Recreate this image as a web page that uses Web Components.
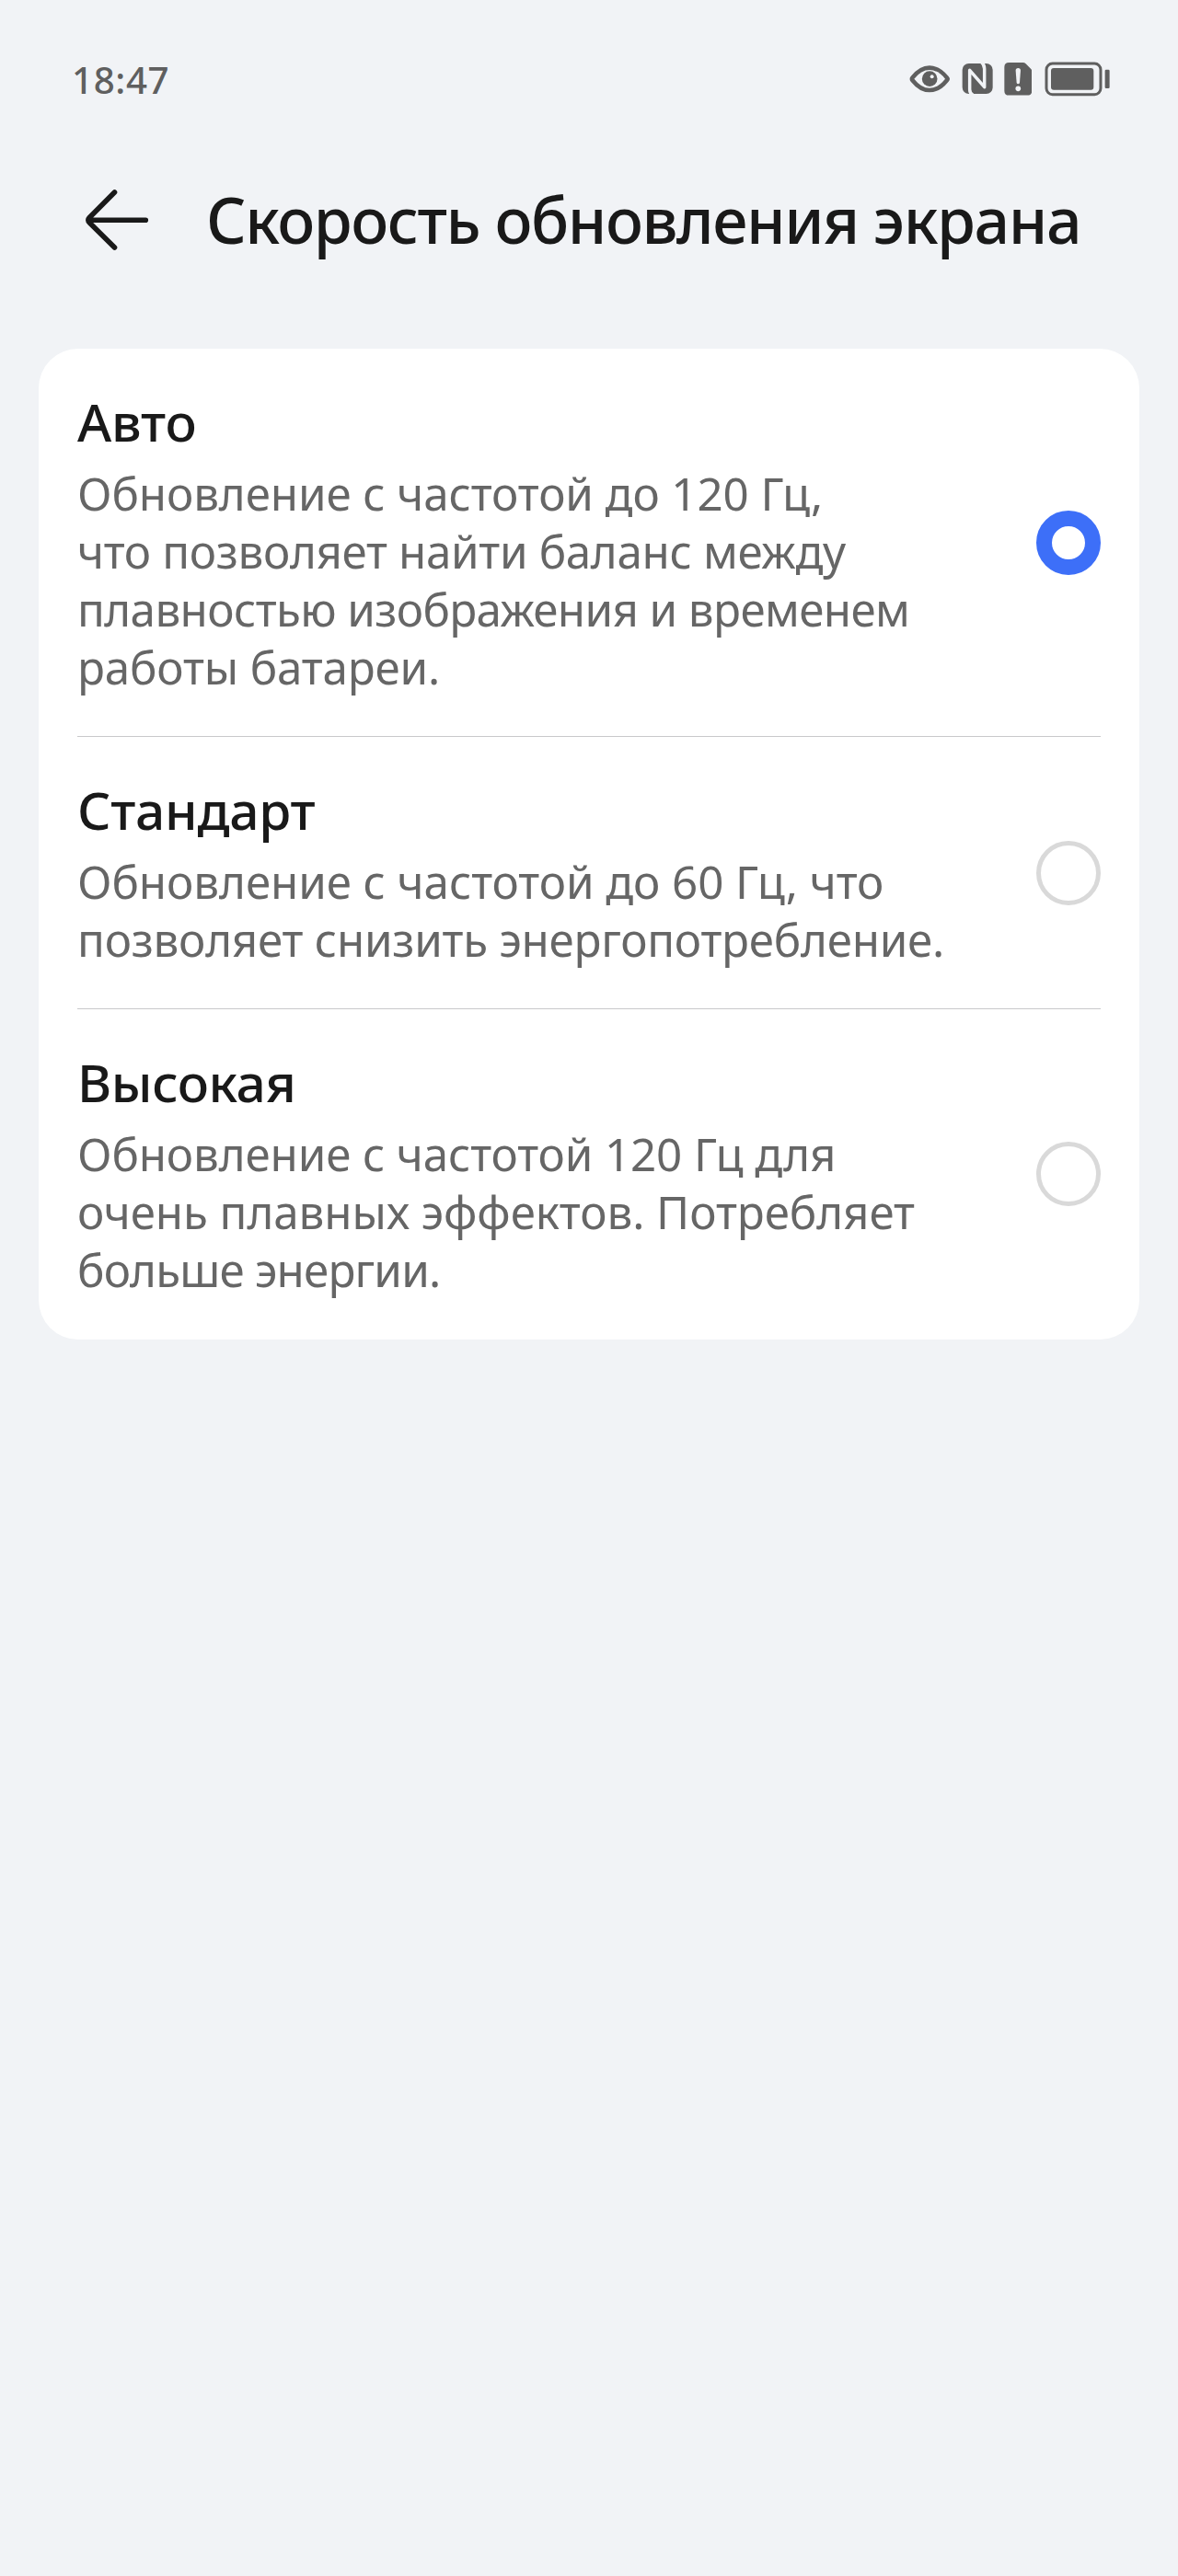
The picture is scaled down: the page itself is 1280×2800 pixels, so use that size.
<!DOCTYPE html>
<html lang="ru">
<head>
<meta charset="utf-8">
<title>Скорость обновления экрана</title>
<style>
    body {
        margin: 0;
        min-height: 2800px;
        background: #f1f3f6;
        color: #191919;
        font-family: "Noto Sans", "Open Sans", sans-serif;
    }
</style>
</head>
<body>

<settings-page>
    <status-bar slot="status" time="18:47"></status-bar>
    <page-header slot="header"><fit-line width="944">Скорость обновления экрана</fit-line></page-header>

    <option-card>
        <option-row checked>
            <fit-line slot="title" width="127.5">Авто</fit-line>
            <fit-line width="805">Обновление с частотой до 120 Гц,</fit-line>
            <fit-line width="834">что позволяет найти баланс между</fit-line>
            <fit-line width="897">плавностью изображения и временем</fit-line>
            <fit-line width="387">работы батареи.</fit-line>
        </option-row>
        <option-row>
            <fit-line slot="title" width="255.5">Стандарт</fit-line>
            <fit-line width="872">Обновление с частотой до 60 Гц, что</fit-line>
            <fit-line width="935">позволяет снизить энергопотребление.</fit-line>
        </option-row>
        <option-row>
            <fit-line slot="title" width="228.5">Высокая</fit-line>
            <fit-line width="819">Обновление с частотой 120 Гц для</fit-line>
            <fit-line width="908">очень плавных эффектов. Потребляет</fit-line>
            <fit-line width="390">больше энергии.</fit-line>
        </option-row>
    </option-card>
</settings-page>

<script>
    class SettingsPage extends HTMLElement {
        constructor() {
            super();
            this.attachShadow({mode: 'open'}).innerHTML = `
                <style>
                    :host { display: flex; flex-direction: column; }
                    main { padding: 0 42px; }
                </style>
                <slot name="status"></slot>
                <slot name="header"></slot>
                <main><slot></slot></main>
            `;
        }
    }

    class StatusBar extends HTMLElement {
        constructor() {
            super();
            this.attachShadow({mode: 'open'}).innerHTML = `
                <style>
                    :host {
                        display: flex;
                        align-items: center;
                        justify-content: space-between;
                        box-sizing: border-box;
                        height: 172px;
                        padding: 0 74px 0 78px;
                        color: #5f5f5f;
                        font-size: 40.3px;
                        font-weight: 500;
                    }
                    .icons { display: flex; align-items: center; }
                    svg { display: block; height: 40px; fill: currentColor; }
                    .eye { width: 44px; margin-right: 12.7px; }
                    .nfc { width: 34px; margin-right: 11.7px; }
                    .sim { width: 30.6px; margin-right: 13.4px; }
                    .battery { width: 71.3px; }
                    .cut { fill: #f1f3f6; }
                </style>
                <fit-line width="101.6">${this.getAttribute('time')}</fit-line>
                <div class="icons">
                    <svg class="eye" viewBox="55 48 132 120">
                        <path d="M57 107Q56 104 60 99Q88 64 121 64Q155 64 183 99Q187 104 187 107Q187 111 183 116Q155 151 121 151Q88 151 60 116Q56 111 57 107Z"/>
                        <path class="cut" d="M71 107Q94 78 121 78Q149 78 172 107Q149 137 121 137Q94 137 71 107Z"/>
                        <circle cx="121.500" cy="107" r="25"/>
                        <circle class="cut" cx="129" cy="100" r="6"/>
                    </svg>
                    <svg class="nfc" viewBox="225 48 102 120">
                        <rect x="227" y="57" width="99" height="99" rx="21"/>
                        <path d="M262 160Q251 155 251 142V79L299 134V74Q299 61 289 52" fill="none" stroke="#f1f3f6" stroke-width="10.500" stroke-linejoin="round"/>
                    </svg>
                    <svg class="sim" viewBox="362 48 92 120">
                        <path d="M378 54H424Q429 54 433 58L450 75Q453 78 453 84V146Q453 161 438 161H378Q363 161 363 146V69Q363 54 378 54Z"/>
                        <path class="cut" d="M400 80Q400 72 408 72Q416 72 416 80L413 120Q412 124 408 124Q404 124 403 120Z"/>
                        <circle class="cut" cx="408" cy="139" r="8.500"/>
                    </svg>
                    <svg class="battery" viewBox="494 48 214 120">
                        <rect x="500" y="57" width="177" height="101" rx="20" fill="none" stroke="currentColor" stroke-width="9"/>
                        <rect x="515" y="72" width="139" height="71" rx="9"/>
                        <rect x="691" y="77" width="15" height="61" rx="4"/>
                    </svg>
                </div>
            `;
        }
    }

    class PageHeader extends HTMLElement {
        constructor() {
            super();
            this.attachShadow({mode: 'open'}).innerHTML = `
                <style>
                    :host {
                        display: flex;
                        align-items: center;
                        box-sizing: border-box;
                        height: 207px;
                        padding: 0 84px 74px;
                        font-size: 68.1px;
                        font-weight: 500;
                        line-height: 80px;
                    }
                    svg { flex: none; width: 84px; height: 72px; margin-right: 56px; }
                </style>
                <svg viewBox="0 0 84 72" fill="none" stroke="currentColor" stroke-width="5.600" stroke-linecap="round" stroke-linejoin="round">
                    <path d="M40.500 6L13.200 33.400Q10.700 36.200 13.200 39L40.500 66M13 36.200H74.300"/>
                </svg>
                <slot></slot>
            `;
        }
    }

    class OptionCard extends HTMLElement {
        constructor() {
            super();
            this.attachShadow({mode: 'open'}).innerHTML = `
                <style>
                    :host {
                        display: block;
                        padding: 0 42px 1px;
                        border-radius: 43px;
                        background: #fff;
                    }
                    ::slotted(option-row:not(:last-child)) { border-bottom: 1px solid #c9c9cb; }
                </style>
                <slot></slot>
            `;
        }
    }

    class OptionRow extends HTMLElement {
        constructor() {
            super();
            this.attachShadow({mode: 'open'}).innerHTML = `
                <style>
                    :host {
                        display: flex;
                        align-items: center;
                        justify-content: space-between;
                    }
                    .text { padding: 46px 0 44px; }
                    .title {
                        margin-bottom: 13px;
                        font-size: 56.9px;
                        font-weight: 500;
                        line-height: 66px;
                    }
                    .description {
                        color: #666;
                        font-size: 49.3px;
                        line-height: 63px;
                    }
                    .radio {
                        box-sizing: border-box;
                        flex: none;
                        width: 70px;
                        height: 70px;
                        border: 5px solid #d9d9d9;
                        border-radius: 50%;
                    }
                    :host([checked]) .radio { border: 17.500px solid #3d6ff8; }
                </style>
                <div class="text">
                    <div class="title"><slot name="title"></slot></div>
                    <div class="description"><slot></slot></div>
                </div>
                <div class="radio"></div>
            `;
        }
    }

    // one line of text, tracked so that its ink takes the given width
    class FitLine extends HTMLElement {
        constructor() {
            super();
            this.attachShadow({mode: 'open'}).innerHTML = `
                <style>
                    :host { display: block; white-space: nowrap; }
                </style>
                <slot></slot>
            `;
        }

        connectedCallback() {
            const style = getComputedStyle(this);
            const ctx = document.createElement('canvas').getContext('2d');
            ctx.font = `${style.fontWeight} ${style.fontSize} ${style.fontFamily}`;
            const text = this.textContent;
            const m = ctx.measureText(text);
            const ink = m.actualBoundingBoxLeft + m.actualBoundingBoxRight;
            this.style.letterSpacing = (this.getAttribute('width') - ink) / (text.length - 1) + 'px';
        }
    }

    customElements.define('settings-page', SettingsPage);
    customElements.define('status-bar', StatusBar);
    customElements.define('page-header', PageHeader);
    customElements.define('option-card', OptionCard);
    customElements.define('option-row', OptionRow);
    // last: it reads the font that the elements above give it
    customElements.define('fit-line', FitLine);
</script>
</body>
</html>
